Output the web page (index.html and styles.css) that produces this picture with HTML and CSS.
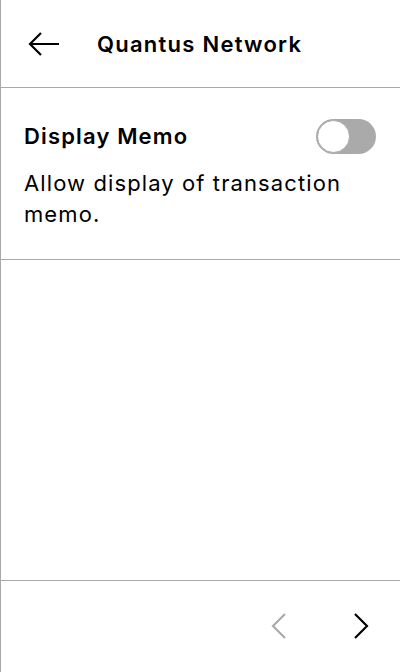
FILE: index.html
```html
<!DOCTYPE html>
<html>
<head>
<meta charset="utf-8">
<link rel="stylesheet" href="styles.css">
</head>
<body>
<div class="screen">
  <header class="header">
    <svg class="back" width="32" height="24" viewBox="0 0 32 24"><path d="M31 12H2M13 1L2 12l11 11" fill="none" stroke="#000" stroke-width="2.2"/></svg>
    <h1 class="title">Quantus Network</h1>
  </header>
  <section class="setting">
    <div class="row">
      <span class="label">Display Memo</span>
      <span class="toggle"><span class="knob"></span></span>
    </div>
    <p class="desc">Allow display of transaction memo.</p>
  </section>
  <div class="spacer"></div>
  <footer class="footer">
    <svg class="chev" width="16" height="26" viewBox="0 0 16 26"><path d="M14 1L2 13l12 12" fill="none" stroke="#aaa" stroke-width="2.2"/></svg>
    <svg class="chev" width="16" height="26" viewBox="0 0 16 26"><path d="M2 1l12 12L2 25" fill="none" stroke="#000" stroke-width="2.2"/></svg>
  </footer>
</div>
</body>
</html>
```
FILE: styles.css
```css
html, body { margin: 0; padding: 0; background: #fff; }
body { font-family: Inter, "Noto Sans", sans-serif; color: #000; }
.screen {
  width: 400px; height: 672px; box-sizing: border-box;
  border-left: 1px solid #aaa;
  display: flex; flex-direction: column;
}
.header {
  height: 88px; box-sizing: border-box;
  border-bottom: 1px solid #aaa;
  display: flex; align-items: center;
  padding-left: 27px;
}
.back { display: block; margin-right: 37px; }
.title { margin: 0; font-size: 22px; font-weight: 600; letter-spacing: 1.25px; }
.setting {
  height: 172px; box-sizing: border-box;
  border-bottom: 1px solid #aaa;
  padding: 30px 24px 0 23px;
}
.row { display: flex; justify-content: space-between; align-items: center; height: 36px; }
.label { font-size: 22px; font-weight: 600; letter-spacing: 1.15px; }
.toggle {
  width: 60px; height: 35px; border-radius: 18px; background: #aaa;
  display: flex; align-items: center; padding-left: 1px; box-sizing: border-box;
}
.knob {
  width: 31px; height: 31px; border-radius: 50%; background: #fff;
  border: 1px solid #aaa;
}
.desc { margin: 14px 0 0; font-size: 22px; line-height: 31px; font-weight: 400; letter-spacing: 1.1px; }
.spacer { flex: 1; }
.footer {
  height: 92px; box-sizing: border-box;
  border-top: 1px solid #aaa;
  display: flex; justify-content: flex-end; align-items: center;
  gap: 66px; padding-right: 31px; padding-bottom: 2px;
}
.chev { display: block; }
```
